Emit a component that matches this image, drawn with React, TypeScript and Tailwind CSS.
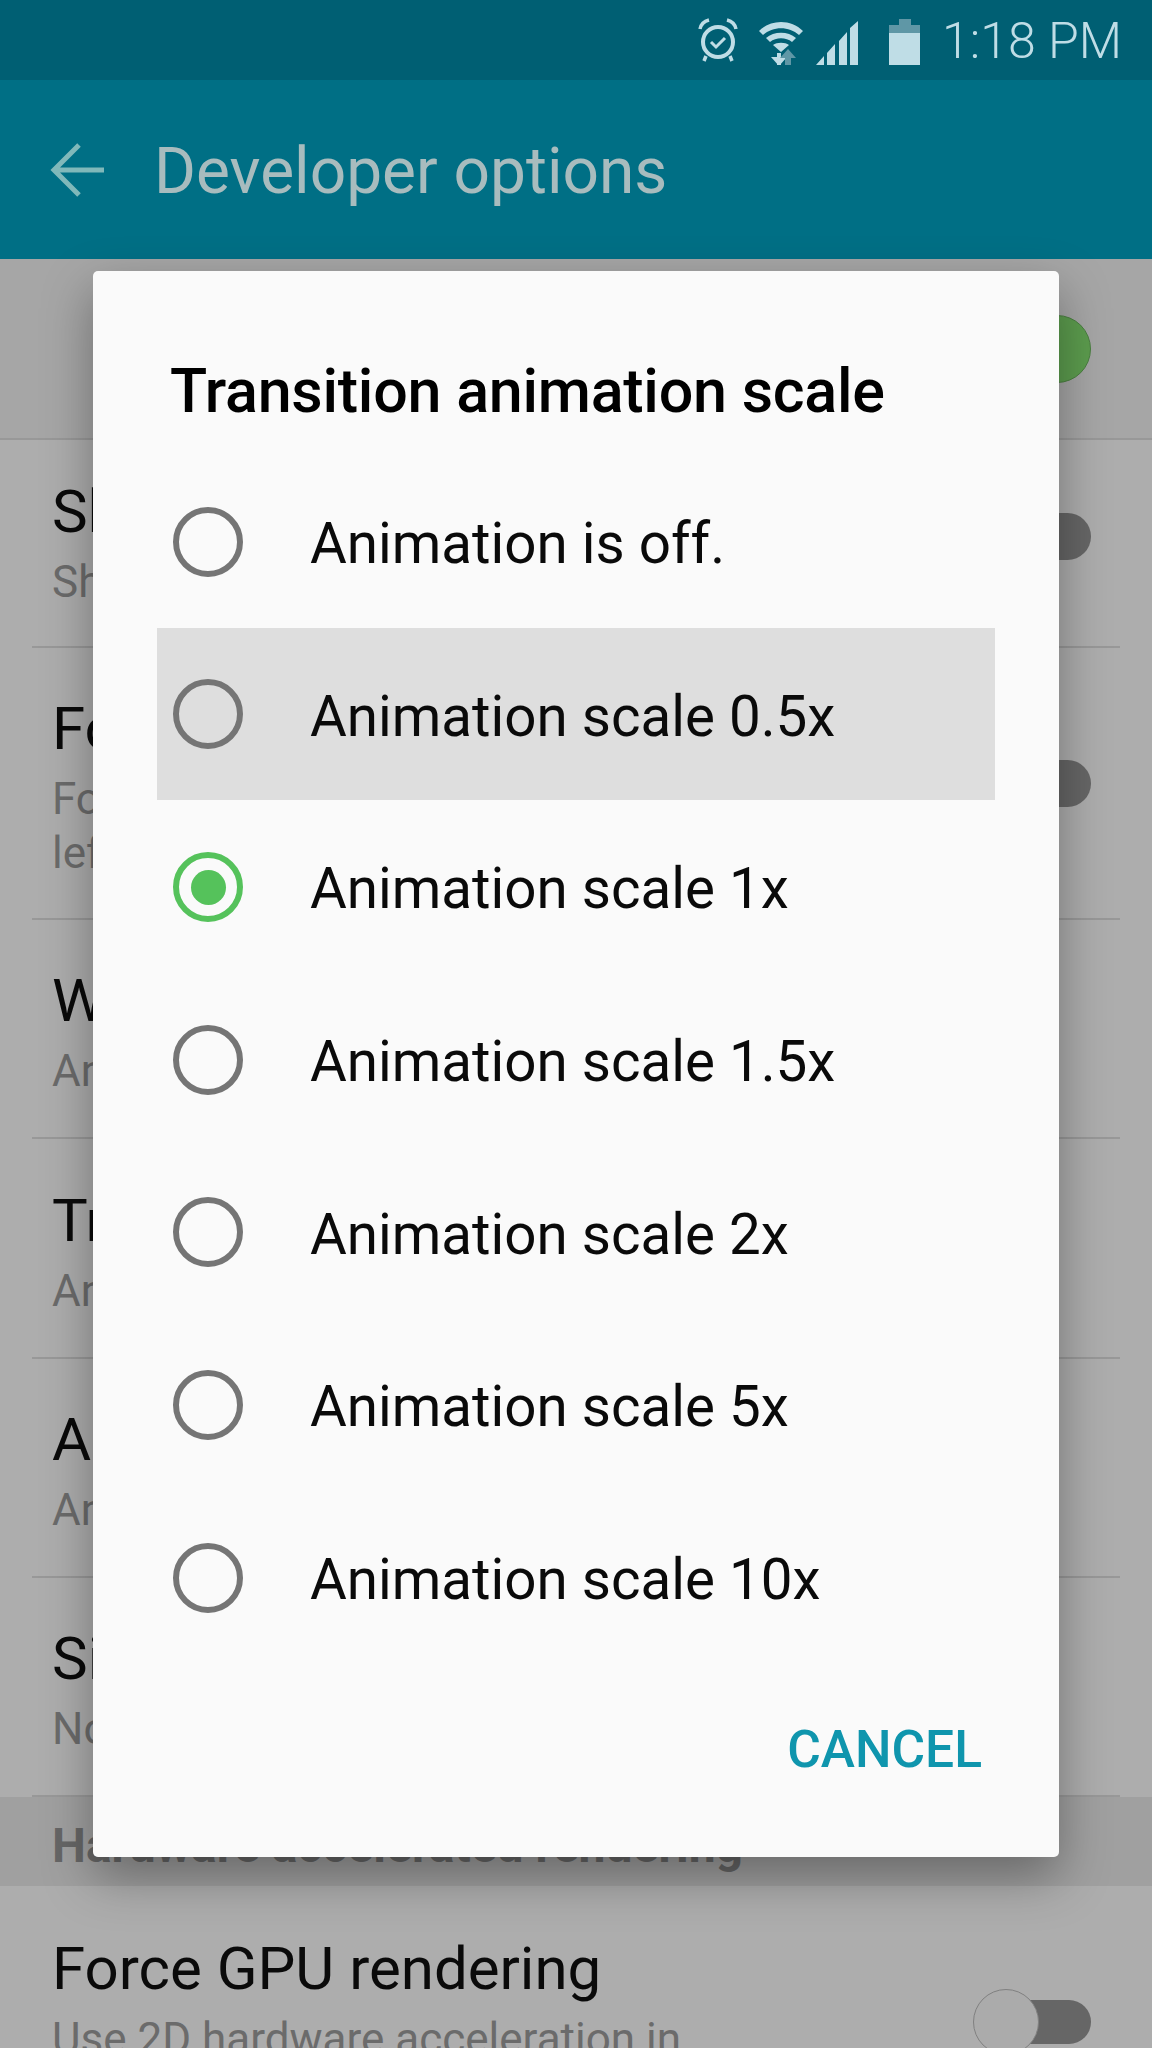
const settings = [
  { title: 'Show surface updates', sub: ['Show updates on screen'], height: 'h-[208px]', pad: 'pt-0', toggle: 'mb-[13px]' },
  { title: 'Force RTL layout direction', sub: ['Force screen layout direction to right-to-', 'left for all locales'], height: 'h-[272px]', pad: 'pt-[8px]', toggle: '' },
  { title: 'Window animation scale', sub: ['Animation scale 1x'], height: 'h-[219px]', pad: 'pt-[8px]' },
  { title: 'Transition animation scale', sub: ['Animation scale 1x'], height: 'h-[220px]', pad: 'pt-[8px]' },
  { title: 'Animator duration scale', sub: ['Animation scale 1x'], height: 'h-[219px]', pad: 'pt-[8px]' },
  { title: 'Simulate secondary displays', sub: ['None'], height: 'h-[219px]', pad: 'pt-[8px]' },
]

const scales = [
  'Animation is off.',
  'Animation scale 0.5x',
  'Animation scale 1x',
  'Animation scale 1.5x',
  'Animation scale 2x',
  'Animation scale 5x',
  'Animation scale 10x',
]

function StatusIcons() {
  return (
    <svg width="222" height="50" viewBox="0 0 222 50" className="shrink-0" fill="#bfdde6">
      {/* alarm */}
      <circle cx="20" cy="27" r="15" fill="none" stroke="#bfdde6" strokeWidth="4" />
      <path d="M13 27l5 5 9-9" fill="none" stroke="#bfdde6" strokeWidth="3" />
      <path d="M2 14c1-5 5-8 9-9M38 14c-1-5-5-8-9-9M8 41l-2 5M32 41l2 5" fill="none" stroke="#bfdde6" strokeWidth="3.5" />
      {/* wifi */}
      <path d="M61 16c12-12 32-12 44 0l-4 4c-10-9-26-9-36 0zM68 23c8-7 22-7 30 0l-4 4c-6-5-16-5-22 0zM75 30c4-3 12-3 16 0l-8 7z" />
      <path d="M79 38h4v12h-4z" />
      <path d="M73 42h16l-8 9z" />
      <path d="M90 34l8 9h-5v7h-6v-7h-5z" fill="#5f97a6" />
      {/* signal */}
      <path d="M118 50l8-9v9zM129 38l8-9v21h-8zM141 26l8-9v33h-8zM152 13l8-7v44h-8z" />
      {/* battery */}
      <path d="M199 5h12v6h10v8h-32v-8h10z" fill="#5f97a6" transform="translate(2 -1)" />
      <path d="M191 18h32v32h-32z" />
    </svg>
  )
}

function SettingRow({ title, sub, height, pad, toggle }: { title: string; sub: string[]; height: string; pad: string; toggle?: string }) {
  return (
    <div className={`${height} mx-[32px] flex items-center justify-between border-b-2 border-[#989898] pl-[20px] pr-[29px]`}>
      <div className={`whitespace-nowrap ${pad}`}>
        <div className="mb-[9px] text-[60px] leading-[68px] text-[#0a0a0a]">{title}</div>
        {sub.map((line) => (
          <div key={line} className="text-[44px] leading-[54px] text-[#6b6b6b]">
            {line}
          </div>
        ))}
      </div>
      {toggle !== undefined && <div className={`h-[47px] w-[90px] shrink-0 rounded-full bg-[#666666] ${toggle}`} />}
    </div>
  )
}

function Radio({ checked }: { checked: boolean }) {
  return (
    <div
      className={`mt-[1px] flex h-[70px] w-[70px] shrink-0 items-center justify-center rounded-full border-[6px] ${
        checked ? 'border-[#55c25b]' : 'border-[#757575]'
      }`}
    >
      {checked && <div className="h-[35px] w-[35px] rounded-full bg-[#55c25b]" />}
    </div>
  )
}

export default function App() {
  return (
    <div className="relative h-[2048px] w-[1152px] overflow-hidden bg-[#adadad] font-['Roboto',sans-serif]">
      {/* Status bar */}
      <div className="flex h-[80px] items-center justify-end bg-[#005f73] pr-[30px]">
        <StatusIcons />
        <span className="ml-[22px] mt-[2px] text-[50px] font-light leading-none text-[#bfdde6]">1:18 PM</span>
      </div>

      {/* Toolbar */}
      <div className="flex h-[179px] items-center bg-[#006f85] pl-[50px]">
        <svg width="56" height="56" viewBox="0 0 56 56" fill="none" stroke="#80b8ba" strokeWidth="5" className="mr-[48px] shrink-0">
          <path d="M54 28H5M29 3L4 28l25 25" />
        </svg>
        <span className="mt-[5px] text-[64px] leading-none text-[#a8bcbe]">Developer options</span>
      </div>

      {/* Master switch row */}
      <div className="flex h-[181px] items-center justify-end border-b-2 border-[#989898] bg-[#a6a6a6] pr-[61px]">
        <div className="h-[68px] w-[68px] rounded-full border border-[#4a7f40] bg-[#5c9c4e]" />
      </div>

      {settings.map((s) => (
        <SettingRow key={s.title} title={s.title} sub={s.sub} height={s.height} pad={s.pad} toggle={s.toggle} />
      ))}

      {/* Section header */}
      <div className="flex h-[89px] items-center bg-[#a0a0a0] pl-[52px] pt-[8px] text-[48px] font-bold text-[#666666]">
        Hardware accelerated rendering
      </div>

      <div className="flex items-start justify-between pl-[52px] pr-[61px] pt-[49px]">
        <div className="whitespace-nowrap">
          <div className="mb-[9px] text-[60px] leading-[68px] text-[#0a0a0a]">Force GPU rendering</div>
          <div className="text-[44px] leading-[54px] text-[#6b6b6b]">Use 2D hardware acceleration in</div>
        </div>
        <div className="relative mt-[65px] h-[44px] w-[90px] rounded-full bg-[#666666]">
          <div className="absolute left-[-28px] top-[-11px] h-[66px] w-[66px] rounded-full border border-[#808080] bg-[#ababab]" />
        </div>
      </div>

      {/* Dialog */}
      <div className="absolute left-[93px] top-[271px] flex h-[1586px] w-[966px] flex-col rounded-[5px] bg-[#fafafa] shadow-[0_20px_50px_rgba(0,0,0,0.35)]">
        <div className="pl-[77px] pt-[90px] text-[61px] font-medium leading-[60px] tracking-[-0.25px] text-black">
          Transition animation scale
        </div>
        <div className="mx-[64px] mt-[34px] flex flex-col">
          {scales.map((label, i) => (
            <div
              key={label}
              className={`flex h-[172.67px] items-center pl-[16px] ${i === 1 ? 'bg-[#dedede]' : ''}`}
            >
              <Radio checked={i === 2} />
              <span className="ml-[67px] mt-[6px] text-[56.5px] leading-none text-[#0a0a0a]">{label}</span>
            </div>
          ))}
        </div>
        <div className="mt-auto flex justify-end pb-[82px] pr-[77px] text-[51.5px] font-medium leading-none text-[#0f95ad]">
          CANCEL
        </div>
      </div>
    </div>
  )
}
